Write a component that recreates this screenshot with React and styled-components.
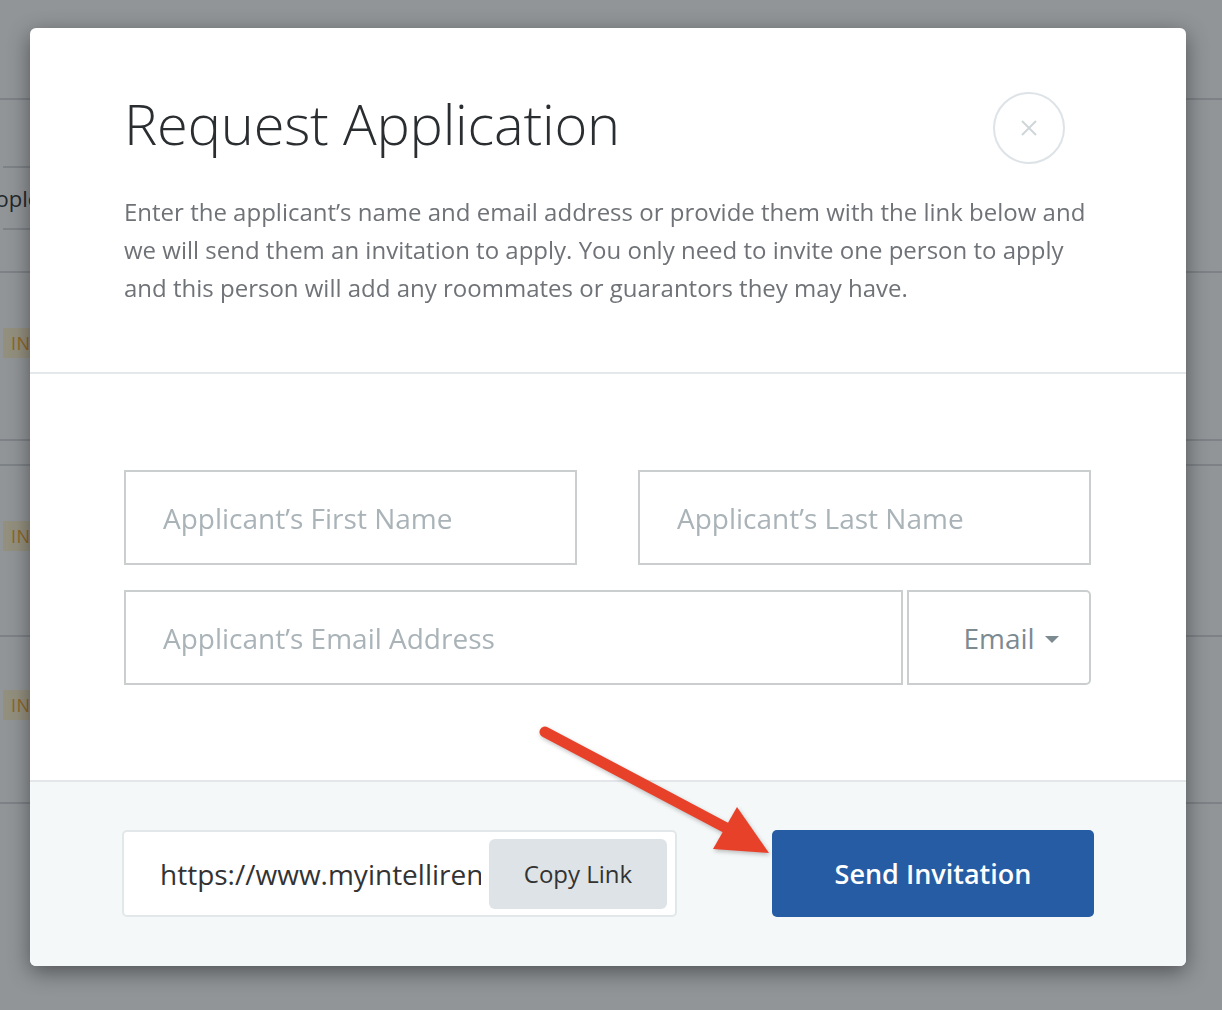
import React from "react"
import styled, { createGlobalStyle } from "styled-components"

const GlobalStyle = createGlobalStyle`
  * { box-sizing: border-box; }
  html, body {
    margin: 0;
    padding: 0;
    width: 1222px;
    height: 1010px;
    overflow: hidden;
    font-family: "Open Sans", "Liberation Sans", sans-serif;
    background: #f7fafc;
  }
`

/* ---------- page behind the dialog ---------- */

const Page = styled.div`
  width: 1222px;
  height: 1010px;
  background: #f7fafc;
  overflow: hidden;
`

const PageRow = styled.div`
  height: ${p => p.h}px;
  border-bottom: 2px solid #d3d8dc;
  padding-left: 3px;
  display: flex;
  flex-direction: column;
`

const SubRow = styled.div`
  width: 700px;
  height: ${p => p.h}px;
  border-bottom: ${p => (p.line ? "2px solid #d3d8dc" : "none")};
  display: flex;
  align-items: center;
`

const RowLabel = styled.span`
  margin-left: -33px;
  font-size: 22px;
  color: #2f3337;
`

const Badge = styled.span`
  margin-top: ${p => p.top}px;
  align-self: flex-start;
  height: 30px;
  padding: 0 8px;
  display: flex;
  align-items: center;
  background: #fbf1cf;
  color: #f2a42f;
  font-size: 18px;
  letter-spacing: 0.5px;
`

const Overlay = styled.div`
  position: fixed;
  inset: 0;
  background: rgba(22, 26, 30, 0.45);
  padding: 28px 0 0 30px;
`

/* ---------- dialog ---------- */

const Modal = styled.div`
  position: relative;
  width: 1156px;
  height: 938px;
  background: #fff;
  border-radius: 6px;
  box-shadow: 0 6px 22px rgba(0, 0, 0, 0.45);
  display: flex;
  flex-direction: column;
  overflow: hidden;
`

const Header = styled.div`
  padding: 62px 95px 65px 94px;
  border-bottom: 2px solid #e4e8eb;
`

const TitleRow = styled.div`
  display: flex;
  justify-content: space-between;
  align-items: flex-start;
`

const Title = styled.h1`
  margin: 0;
  font-size: 56px;
  line-height: 67px;
  font-weight: 300;
  color: #2b2e31;
  letter-spacing: -0.2px;
`

const CloseButton = styled.button`
  width: 72px;
  height: 72px;
  margin: 2px 26px 0 0;
  border: 2px solid #dde3e7;
  border-radius: 50%;
  background: #fff;
  display: flex;
  align-items: center;
  justify-content: center;
  padding: 0;
  cursor: pointer;
`

const Description = styled.p`
  margin: 29px 0 0;
  font-size: 24px;
  line-height: 38px;
  color: #6f7377;
`

const Body = styled.div`
  padding: 96px 95px 95px 94px;
  display: flex;
  flex-direction: column;
  gap: 25px;
`

const FieldRow = styled.div`
  display: flex;
  gap: ${p => p.gap}px;
`

const TextField = styled.input`
  flex: 1;
  min-width: 0;
  height: 95px;
  border: 2px solid #cbcecf;
  border-radius: 0;
  padding: 0 0 0 37px;
  font-family: inherit;
  font-size: 28px;
  color: #333;
  outline: none;

  &::placeholder {
    color: #a9b3b8;
  }
`

const SelectButton = styled.button`
  width: 184px;
  height: 95px;
  border: 2px solid #cbcecf;
  border-radius: 0 5px 5px 0;
  background: #fff;
  padding: 0 0 0 24px;
  display: flex;
  align-items: center;
  justify-content: center;
  gap: 10px;
  font-family: inherit;
  font-size: 28px;
  color: #7c8a91;
  cursor: pointer;
`

const Caret = styled.span`
  width: 0;
  height: 0;
  border-left: 7px solid transparent;
  border-right: 7px solid transparent;
  border-top: 7px solid #7c8a91;
  margin-top: 3px;
`

const Footer = styled.div`
  flex: 1;
  background: #f5f8f9;
  border-top: 2px solid #e4e7e9;
  padding: 48px 92px 0 92px;
  display: flex;
  justify-content: space-between;
  align-items: flex-start;
`

const LinkBox = styled.div`
  width: 555px;
  height: 87px;
  background: #fff;
  border: 2px solid #e2e7ea;
  border-radius: 5px;
  padding: 8px;
  display: flex;
  align-items: center;
  gap: 8px;
`

const LinkInput = styled.input`
  flex: 1;
  min-width: 0;
  height: 100%;
  border: 0;
  outline: none;
  padding: 0 0 0 28px;
  font-family: inherit;
  font-size: 28px;
  color: #333;
  background: transparent;
`

const CopyButton = styled.button`
  width: 178px;
  height: 70px;
  border: 0;
  border-radius: 6px;
  background: #dee3e7;
  font-family: inherit;
  font-size: 24px;
  color: #333;
  cursor: pointer;
`

const SendButton = styled.button`
  width: 322px;
  height: 87px;
  border: 0;
  border-radius: 5px;
  background: #255ca3;
  color: #fff;
  font-family: inherit;
  font-size: 27px;
  font-weight: 600;
  cursor: pointer;
`

const Annotation = styled.svg`
  position: absolute;
  left: 0;
  top: 0;
  pointer-events: none;
  filter: drop-shadow(1px 2px 2px rgba(0, 0, 0, 0.25));
`

const CloseIcon = () => (
  <svg width="18" height="18" viewBox="0 0 18 18">
    <path d="M2 2 L16 16 M16 2 L2 16" stroke="#cfd6da" strokeWidth="2" fill="none" />
  </svg>
)

// arrow drawn over the dialog, coordinates relative to the dialog box
const Arrow = () => (
  <Annotation width="1156" height="938" viewBox="0 0 1156 938">
    <line x1="515" y1="704" x2="702" y2="803" stroke="#e8412a" strokeWidth="11" strokeLinecap="round" />
    <polygon points="707,779 683,821 739,825" fill="#e8412a" />
  </Annotation>
)

const App = () => {
  return (
    <>
      <GlobalStyle />
      <Page>
        <PageRow h={100} />
        <PageRow h={173}>
          <SubRow h={68} line />
          <SubRow h={62} line>
            <RowLabel>People</RowLabel>
          </SubRow>
        </PageRow>
        <PageRow h={168}>
          <Badge top={55}>IN</Badge>
        </PageRow>
        <PageRow h={25} />
        <PageRow h={171}>
          <Badge top={55}>IN</Badge>
        </PageRow>
        <PageRow h={167}>
          <Badge top={53}>IN</Badge>
        </PageRow>
      </Page>

      <Overlay>
        <Modal>
          <Header>
            <TitleRow>
              <Title>Request Application</Title>
              <CloseButton aria-label="Close">
                <CloseIcon />
              </CloseButton>
            </TitleRow>
            <Description>
              Enter the applicant’s name and email address or provide them with the link below and
              we will send them an invitation to apply. You only need to invite one person to apply
              and this person will add any roommates or guarantors they may have.
            </Description>
          </Header>

          <Body>
            <FieldRow gap={61}>
              <TextField placeholder="Applicant’s First Name" />
              <TextField placeholder="Applicant’s Last Name" />
            </FieldRow>
            <FieldRow gap={4}>
              <TextField placeholder="Applicant’s Email Address" />
              <SelectButton>
                Email <Caret />
              </SelectButton>
            </FieldRow>
          </Body>

          <Footer>
            <LinkBox>
              <LinkInput readOnly value="https://www.myintellirent.com/apply/invite" />
              <CopyButton>Copy Link</CopyButton>
            </LinkBox>
            <SendButton>Send Invitation</SendButton>
          </Footer>

          <Arrow />
        </Modal>
      </Overlay>
    </>
  )
}

export default App
